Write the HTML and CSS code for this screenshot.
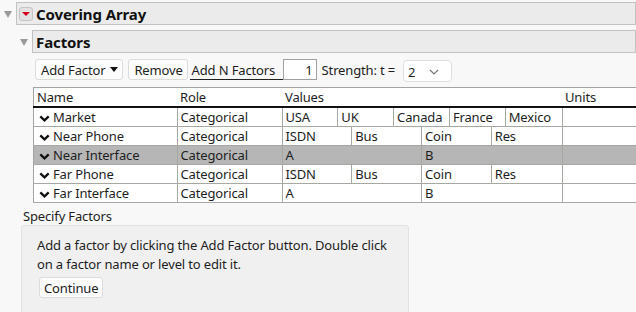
FILE: index.html
```html
<!DOCTYPE html>
<html lang="en">
<head>
  <meta charset="UTF-8">
  <title>Covering Array</title>
  <link rel="stylesheet" href="styles.css">
</head>
<body>
  <div class="outline">
    <div class="outline-head">
      <span class="disclose"></span>
      <div class="head-box head-main">
        <span class="red-btn"><span class="red-tri"></span></span>
        <span class="title">Covering Array</span>
      </div>
    </div>

    <div class="outline-head sub">
      <span class="disclose"></span>
      <div class="head-box">
        <span class="title">Factors</span>
      </div>
    </div>

    <div class="factors">
      <div class="toolbar">
        <button class="btn">Add Factor <span class="caret"></span></button>
        <button class="btn">Remove</button>
        <span class="n-label">Add N Factors</span>
        <span class="n-input">1</span>
        <span class="strength">Strength: t =</span>
        <span class="select">2
          <svg width="10" height="6" viewBox="0 0 10 6"><polyline points="1,1 5,5 9,1" fill="none" stroke="#777" stroke-width="1.2"/></svg>
        </span>
      </div>

      <table class="grid">
        <thead>
          <tr>
            <th class="c-name">Name</th>
            <th class="c-role">Role</th>
            <th class="c-values">Values</th>
            <th class="c-units">Units</th>
          </tr>
        </thead>
        <tbody>
          <tr>
            <td><span class="chev"><svg width="11" height="7" viewBox="0 0 11 7"><polyline points="1.3,1.3 5.5,5.3 9.7,1.3" fill="none" stroke="#111" stroke-width="2.3"/></svg></span>Market</td>
            <td>Categorical</td>
            <td class="vals"><div class="levels five"><span>USA</span><span>UK</span><span>Canada</span><span>France</span><span>Mexico</span></div></td>
            <td></td>
          </tr>
          <tr>
            <td><span class="chev"><svg width="11" height="7" viewBox="0 0 11 7"><polyline points="1.3,1.3 5.5,5.3 9.7,1.3" fill="none" stroke="#111" stroke-width="2.3"/></svg></span>Near Phone</td>
            <td>Categorical</td>
            <td class="vals"><div class="levels four"><span>ISDN</span><span>Bus</span><span>Coin</span><span>Res</span></div></td>
            <td></td>
          </tr>
          <tr class="selected">
            <td><span class="chev"><svg width="11" height="7" viewBox="0 0 11 7"><polyline points="1.3,1.3 5.5,5.3 9.7,1.3" fill="none" stroke="#111" stroke-width="2.3"/></svg></span>Near Interface</td>
            <td>Categorical</td>
            <td class="vals"><div class="levels two"><span>A</span><span>B</span></div></td>
            <td></td>
          </tr>
          <tr>
            <td><span class="chev"><svg width="11" height="7" viewBox="0 0 11 7"><polyline points="1.3,1.3 5.5,5.3 9.7,1.3" fill="none" stroke="#111" stroke-width="2.3"/></svg></span>Far Phone</td>
            <td>Categorical</td>
            <td class="vals"><div class="levels four"><span>ISDN</span><span>Bus</span><span>Coin</span><span>Res</span></div></td>
            <td></td>
          </tr>
          <tr>
            <td><span class="chev"><svg width="11" height="7" viewBox="0 0 11 7"><polyline points="1.3,1.3 5.5,5.3 9.7,1.3" fill="none" stroke="#111" stroke-width="2.3"/></svg></span>Far Interface</td>
            <td>Categorical</td>
            <td class="vals"><div class="levels two"><span>A</span><span>B</span></div></td>
            <td></td>
          </tr>
        </tbody>
      </table>
    </div>

    <div class="specify">
      <div class="specify-title">Specify Factors</div>
      <div class="specify-box">
        <p>Add a factor by clicking the Add Factor button. Double click on a factor name or level to edit it.</p>
        <button class="btn">Continue</button>
      </div>
    </div>
  </div>
</body>
</html>
```

FILE: styles.css
```css
body {
  margin: 0;
  background: #f8f8f8;
  font-family: "Noto Sans", "Open Sans", sans-serif;
  font-size: 13px;
  letter-spacing: -0.15px;
  color: #1e1e1e;
  overflow: hidden;
  width: 636px;
  height: 312px;
}

.outline {
  padding-top: 2px;
}

/* outline headers */
.outline-head {
  display: flex;
  align-items: stretch;
  padding-left: 4px;
}

.outline-head.sub {
  padding-left: 20px;
  margin-top: 5px;
}

.disclose {
  width: 0;
  height: 0;
  margin-top: 9px;
  margin-right: 4px;
  border-left: 4px solid transparent;
  border-right: 4px solid transparent;
  border-top: 7px solid #9a9a9a;
}

.head-box {
  flex: 1;
  height: 21px;
  display: flex;
  align-items: center;
  background: #ebebeb;
  border: 1px solid #c2c2c2;
  padding-left: 3px;
}

.head-main {
  padding-left: 2px;
}

.red-btn {
  width: 12px;
  height: 12px;
  margin-right: 3px;
  border: 1px solid #c4c4c4;
  border-radius: 3px;
  background: #e2e2e2;
  display: flex;
  align-items: center;
  justify-content: center;
}

.red-tri {
  width: 0;
  height: 0;
  border-left: 4px solid transparent;
  border-right: 4px solid transparent;
  border-top: 4px solid #d4001a;
}

.title {
  font-weight: bold;
  font-size: 15px;
  color: #111;
  letter-spacing: -0.1px;
}

/* factors panel */
.factors {
  padding-left: 33px;
}

.toolbar {
  display: flex;
  align-items: center;
  height: 21px;
  margin-top: 6px;
  padding-left: 2px;
}

.btn {
  font-family: inherit;
  font-size: 13px;
  letter-spacing: -0.15px;
  color: #1e1e1e;
  height: 21px;
  padding: 0 4px;
  background: #fcfcfc;
  border: 1px solid #dcdcdc;
  border-radius: 3px;
  display: inline-flex;
  align-items: center;
  gap: 5px;
}

.toolbar .btn {
  padding: 0 4px 0 5px;
}

.toolbar .btn + .btn {
  margin-left: 5px;
}

.caret {
  width: 0;
  height: 0;
  border-left: 4px solid transparent;
  border-right: 4px solid transparent;
  border-top: 5px solid #111;
}

.n-label {
  margin-left: 2px;
  width: 93px;
  height: 20px;
  line-height: 20px;
  border-bottom: 1px solid #222;
  padding-left: 2px;
  box-sizing: border-box;
}

.n-input {
  width: 34px;
  height: 21px;
  line-height: 20px;
  box-sizing: border-box;
  border: 1px solid #a0a0a0;
  background: #fff;
  text-align: right;
  padding-right: 3px;
}

.strength {
  margin-left: 5px;
}

.select {
  margin-left: 8px;
  margin-top: 3px;
  width: 49px;
  height: 22px;
  box-sizing: border-box;
  border: 1px solid #dedede;
  border-radius: 4px;
  background: #fff;
  display: flex;
  align-items: center;
  justify-content: space-between;
  padding: 2px 12px 0 4px;
}

/* table */
.grid {
  margin-top: 7px;
  border-collapse: collapse;
  width: 620px;
  table-layout: fixed;
  background: #fff;
  border: 1px solid #a3a3a3;
}

.grid th {
  font-weight: normal;
  text-align: left;
  height: 17px;
  padding: 0 3px;
  border-bottom: 2px solid #111;
}

.c-name { width: 137px; }
.c-role { width: 99px; }
.c-values { width: 274px; }

.grid td {
  height: 18px;
  padding: 0 3px;
  border: 1px solid #a8a8a2;
  white-space: nowrap;
}

.grid tbody tr td:first-child {
  border-left: none;
}

.grid tr.selected td {
  background: #b6b6b6;
}

.chev {
  display: inline-block;
  width: 11px;
  margin-left: 2px;
  margin-right: 3px;
}

.grid td.vals {
  padding: 0;
}

.levels {
  display: grid;
  height: 18px;
}

.levels.five { grid-template-columns: repeat(5, 1fr); }
.levels.four { grid-template-columns: repeat(4, 1fr); }
.levels.two { grid-template-columns: repeat(2, 1fr); }

.levels span {
  padding-left: 3px;
  line-height: 19px;
  border-right: 1px solid #a8a8a2;
}

.levels span:last-child {
  border-right: none;
}

/* specify factors */
.specify {
  padding-left: 21px;
  margin-top: 4px;
}

.specify-title {
  padding-left: 2px;
  height: 18px;
  line-height: 18px;
}

.specify-box {
  width: 388px;
  height: 90px;
  box-sizing: border-box;
  background: #f0f0f0;
  border: 1px solid #e2e2e2;
  border-radius: 3px;
  padding: 10px 15px 0 15px;
}

.specify-box p {
  margin: 0;
  line-height: 19px;
}

.specify-box .btn {
  margin-left: 2px;
  margin-top: 3px;
}
```
